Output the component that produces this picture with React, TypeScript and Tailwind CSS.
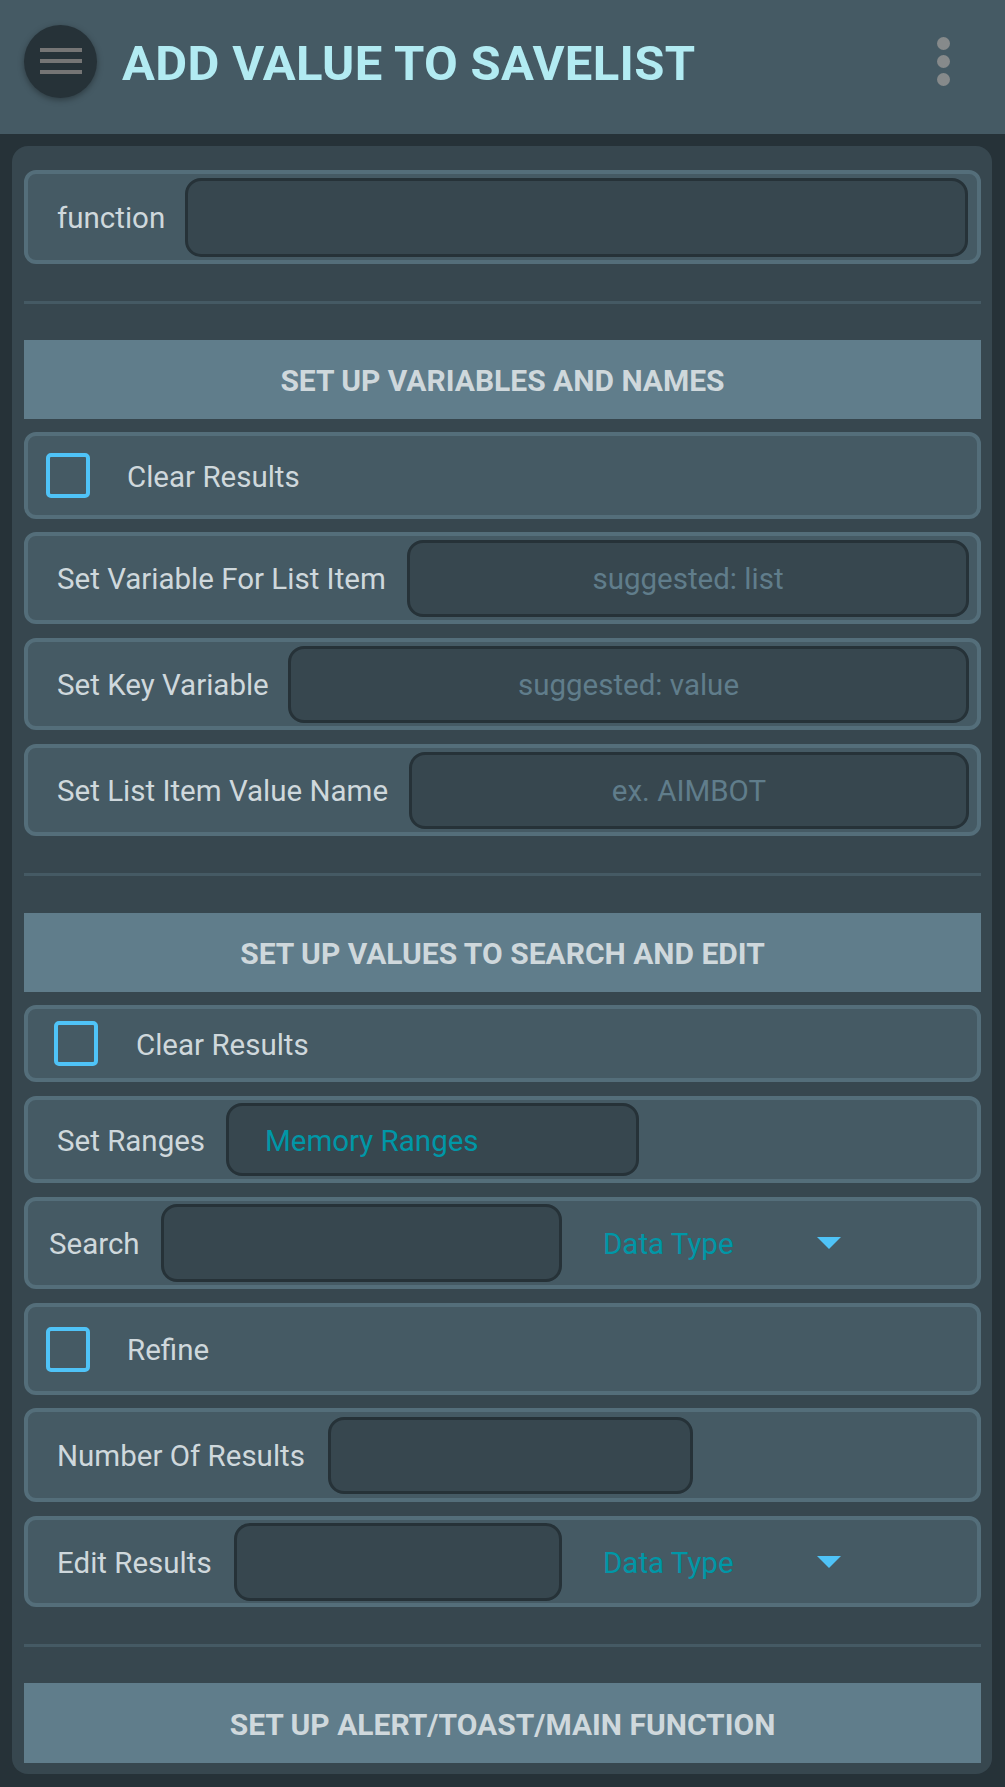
import React from "react";

const FONT = { fontFamily: "Roboto, 'Noto Sans', 'Liberation Sans', sans-serif" };

function Row({ h, mt, children, pl = "pl-[29px]" }: { h: string; mt: string; children: React.ReactNode; pl?: string }) {
  return (
    <div className={`${h} ${mt} ${pl} flex items-center rounded-[12px] border-[4px] border-[#546e7a] bg-[#455a64]`}>
      {children}
    </div>
  );
}

function Label({ w, children }: { w?: string; children: React.ReactNode }) {
  return (
    <div className={`${w ?? ""} shrink-0 whitespace-nowrap pt-[4px] text-[29.5px] leading-none text-[#cfd8dc]`}>{children}</div>
  );
}

function Input({ w, h, placeholder, teal }: { w: string; h: string; placeholder?: string; teal?: string }) {
  return (
    <div
      className={`${w} ${h} shrink-0 flex items-center rounded-[16px] border-[3px] border-[#263238] bg-[#37474f] pt-[4px] text-[29.5px] leading-none`}
    >
      {placeholder && <div className="w-full text-center text-[#607d8b]">{placeholder}</div>}
      {teal && <div className="pl-[36px] text-[#0097a7]">{teal}</div>}
    </div>
  );
}

function Check({ children, pl, gap }: { children: React.ReactNode; pl: string; gap: string }) {
  return (
    <div className={`flex items-center ${pl}`}>
      <div className="h-[45px] w-[44px] shrink-0 rounded-[5px] border-[4px] border-[#4fc3f7]" />
      <div className={`${gap} whitespace-nowrap pt-[4px] text-[29.5px] leading-none text-[#cfd8dc]`}>{children}</div>
    </div>
  );
}

function DataType() {
  return (
    <div className="ml-[41px] flex items-center">
      <div className="w-[214px] pt-[4px] text-[29.5px] leading-none text-[#0097a7]">Data Type</div>
      <svg width="24" height="12" viewBox="0 0 24 12">
        <path d="M0 0 L24 0 L12 12 Z" fill="#4fc3f7" />
      </svg>
    </div>
  );
}

function Divider({ mt }: { mt: string }) {
  return <div className={`${mt} h-[3px] bg-[#455a64]`} />;
}

function SectionHeader({ mt, h, children }: { mt: string; h: string; children: React.ReactNode }) {
  return (
    <div className={`${mt} ${h} flex items-center justify-center bg-[#607d8b] pt-[3px] text-[30px] font-bold leading-none text-[#cfd8dc]`}>
      {children}
    </div>
  );
}

export default function App() {
  return (
    <div className="min-h-[1787px] w-[1005px] bg-[#263238] pb-[13px]" style={FONT}>
      {/* Top bar */}
      <div className="h-[134px] bg-[#455a64]">
        <div className="flex h-[122px] items-center">
          <div className="ml-[24px] flex h-[73px] w-[73px] shrink-0 flex-col items-center justify-center gap-[7px] rounded-full bg-[#263238] shadow-[0_2px_6px_rgba(0,0,0,0.35)]">
            <div className="h-[4px] w-[42px] bg-[#757575]" />
            <div className="h-[4px] w-[42px] bg-[#757575]" />
            <div className="h-[4px] w-[42px] bg-[#757575]" />
          </div>
          <div className="ml-[25px] whitespace-nowrap pt-[4px] text-[49px] font-bold leading-none tracking-[0.35px] text-[#b2ebf2]">
            ADD VALUE TO SAVELIST
          </div>
          <div className="ml-auto mr-[55px] flex flex-col gap-[5px]">
            <div className="h-[13px] w-[13px] rounded-full bg-[#868a8b]" />
            <div className="h-[13px] w-[13px] rounded-full bg-[#868a8b]" />
            <div className="h-[13px] w-[13px] rounded-full bg-[#868a8b]" />
          </div>
        </div>
      </div>

      {/* Panel */}
      <div className="ml-[12px] mt-[12px] w-[980px] rounded-[16px] bg-[#37474f] pb-[11px] pl-[12px] pr-[11px] pt-[24px]">
        <Row h="h-[94px]" mt="mt-0">
          <Label w="w-[128px]">function</Label>
          <Input w="w-[783px]" h="h-[79px]" />
        </Row>

        <Divider mt="mt-[37px]" />
        <SectionHeader mt="mt-[36px]" h="h-[79px]">SET UP VARIABLES AND NAMES</SectionHeader>

        <Row h="h-[87px]" mt="mt-[13px]" pl="pl-0">
          <Check pl="pl-[18px]" gap="ml-[37px]">Clear Results</Check>
        </Row>
        <Row h="h-[92px]" mt="mt-[13px]">
          <Label w="w-[350px]">Set Variable For List Item</Label>
          <Input w="w-[562px]" h="h-[77px]" placeholder="suggested: list" />
        </Row>
        <Row h="h-[92px]" mt="mt-[14px]">
          <Label w="w-[231px]">Set Key Variable</Label>
          <Input w="w-[681px]" h="h-[77px]" placeholder="suggested: value" />
        </Row>
        <Row h="h-[92px]" mt="mt-[14px]">
          <Label w="w-[352px]">Set List Item Value Name</Label>
          <Input w="w-[560px]" h="h-[77px]" placeholder="ex. AIMBOT" />
        </Row>

        <Divider mt="mt-[37px]" />
        <SectionHeader mt="mt-[37px]" h="h-[79px]">SET UP VALUES TO SEARCH AND EDIT</SectionHeader>

        <Row h="h-[77px]" mt="mt-[13px]" pl="pl-0">
          <Check pl="pl-[26px]" gap="ml-[38px]">Clear Results</Check>
        </Row>
        <Row h="h-[87px]" mt="mt-[14px]">
          <Label w="w-[169px]">Set Ranges</Label>
          <Input w="w-[413px]" h="h-[73px]" teal="Memory Ranges" />
        </Row>
        <Row h="h-[92px]" mt="mt-[14px]" pl="pl-[21px]">
          <Label w="w-[112px]">Search</Label>
          <Input w="w-[401px]" h="h-[78px]" />
          <DataType />
        </Row>
        <Row h="h-[92px]" mt="mt-[14px]" pl="pl-0">
          <Check pl="pl-[18px]" gap="ml-[37px]">Refine</Check>
        </Row>
        <Row h="h-[94px]" mt="mt-[13px]">
          <Label w="w-[271px]">Number Of Results</Label>
          <Input w="w-[365px]" h="h-[77px]" />
        </Row>
        <Row h="h-[91px]" mt="mt-[14px]">
          <Label w="w-[177px]">Edit Results</Label>
          <Input w="w-[328px]" h="h-[78px]" />
          <DataType />
        </Row>

        <Divider mt="mt-[37px]" />
        <SectionHeader mt="mt-[36px]" h="h-[80px]">SET UP ALERT/TOAST/MAIN FUNCTION</SectionHeader>
      </div>
    </div>
  );
}
